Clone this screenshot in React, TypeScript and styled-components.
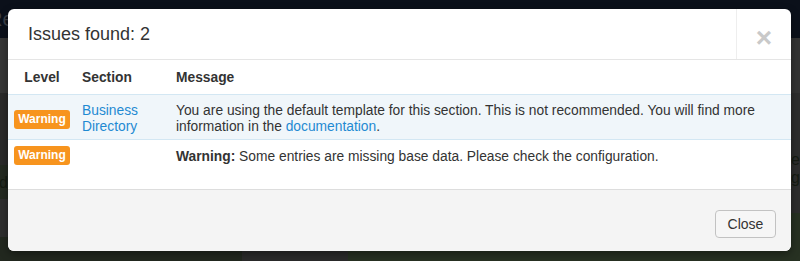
import React from "react";
import styled, { createGlobalStyle } from "styled-components";

const Global = createGlobalStyle`
  html, body { margin: 0; padding: 0; }
  body {
    width: 800px;
    height: 261px;
    overflow: hidden;
    background: #2c2c2c;
    font-family: "Liberation Sans", Arial, Helvetica, sans-serif;
  }
`;

/* ---------- dimmed page behind the modal ---------- */
const Page = styled.div`
  position: relative;
  width: 800px;
  height: 261px;
  display: flex;
  flex-direction: column;
`;

const TopBar = styled.div`
  height: 38px;
  background: #0b101a;
  color: #3c4048;
  font-size: 20px;
  line-height: 38px;
  overflow: hidden;
  white-space: nowrap;
  text-indent: -12px;
`;

const PageBody = styled.div`
  flex: 1;
  display: grid;
  grid-template-columns: 242px 106px 1fr;
`;

const Column = styled.div`
  display: flex;
  flex-direction: column;
`;

const Block = styled.div<{ $h?: number; $bg: string; $grow?: boolean }>`
  height: ${(p) => (p.$h ? `${p.$h}px` : "auto")};
  flex: ${(p) => (p.$grow ? 1 : "none")};
  background: ${(p) => p.$bg};
  color: #151b12;
  font-size: 16px;
  line-height: 18px;
  overflow: hidden;
  white-space: nowrap;
`;

const BgText = styled.div<{ $indent: number; $pad?: number }>`
  padding-top: ${(p) => p.$pad ?? 0}px;
  text-indent: ${(p) => p.$indent}px;
`;

/* ---------- modal ---------- */
const Overlay = styled.div`
  position: absolute;
  inset: 0;
  padding: 9px 9px 0 8px;
`;

const Modal = styled.div`
  width: 783px;
  height: 242px;
  background: #fff;
  border-radius: 6px;
  overflow: hidden;
  display: flex;
  flex-direction: column;
  color: #333;
  box-shadow: 0 3px 9px rgba(0, 0, 0, 0.4);
`;

const Header = styled.div`
  height: 50px;
  display: flex;
  border-bottom: 1px solid #e5e5e5;
`;

const Title = styled.h4`
  flex: 1;
  margin: 0;
  padding-left: 20px;
  font-size: 18px;
  font-weight: normal;
  line-height: 50px;
  color: #333;
`;

const CloseX = styled.button`
  width: 55px;
  border: none;
  border-left: 1px solid #eeeeee;
  background: transparent;
  color: #c9c9c9;
  font-family: "Liberation Sans", Arial, sans-serif;
  font-size: 28px;
  font-weight: bold;
  line-height: 1;
  padding: 8px 0 0 0;
  cursor: pointer;
`;

const Table = styled.div`
  display: grid;
  grid-template-columns: 68px 94px 1fr;
  font-size: 13.8px;
  line-height: 16px;
`;

const HeadCell = styled.div<{ $center?: boolean }>`
  height: 35px;
  box-sizing: border-box;
  display: flex;
  align-items: center;
  justify-content: ${(p) => (p.$center ? "center" : "flex-start")};
  padding: 1px 6px 0;
  font-weight: bold;
  color: #333;
  border-bottom: 1px solid #d3e7f3;
`;

const Cell = styled.div<{
  $info?: boolean;
  $align: "center" | "start";
  $pt: number;
  $pb: number;
  $border: string;
}>`
  display: flex;
  align-items: ${(p) => (p.$align === "center" ? "center" : "flex-start")};
  padding: ${(p) => `${p.$pt}px 6px ${p.$pb}px`};
  background: ${(p) => (p.$info ? "#f0f6fa" : "#fff")};
  border-bottom: 1px solid ${(p) => p.$border};
`;

const Badge = styled.span`
  display: inline-block;
  width: 56px;
  height: 19px;
  box-sizing: border-box;
  background: #f7941e;
  color: #fff;
  border-radius: 3px;
  font-size: 12px;
  font-weight: bold;
  line-height: 19px;
  text-align: center;
`;

const Link = styled.a`
  color: #1f8ad2;
  text-decoration: none;
`;

const Message = styled.div<{ $offset?: number }>`
  padding-top: ${(p) => p.$offset ?? 0}px;
`;

const Footer = styled.div`
  flex: 1;
  background: #f4f4f4;
  display: flex;
  justify-content: flex-end;
  align-items: flex-start;
  padding: 20px 15px 0 0;
`;

const Button = styled.button`
  width: 61px;
  height: 28px;
  background: #f6f6f6;
  border: 1px solid #c2c2c2;
  border-radius: 4px;
  color: #333;
  font-family: "Liberation Sans", Arial, sans-serif;
  font-size: 14px;
  padding: 0;
  cursor: pointer;
`;

type Issue = {
  section?: string;
  info?: boolean;
  content: React.ReactNode;
};

const issues: Issue[] = [
  {
    section: "Business Directory",
    info: true,
    content: (
      <>
        You are using the default template for this section. This is not recommended. You will find
        more information in the <Link href="#">documentation</Link>.
      </>
    ),
  },
  {
    content: (
      <>
        <b>Warning:</b> Some entries are missing base data. Please check the configuration.
      </>
    ),
  },
];

export default function App() {
  return (
    <>
      <Global />
      <Page>
        <TopBar>Re</TopBar>
        <PageBody>
          <Column>
            <Block $h={55} $bg="#363636" />
            <Block $h={72} $bg="#2a2a2a" />
            <Block $h={34} $bg="#242a21">
              <BgText $indent={-10} $pad={9}>ed</BgText>
            </Block>
            <Block $h={38} $bg="#2e2e2e" />
            <Block $grow $bg="#22281f" />
          </Column>
          <Column>
            <Block $h={199} $bg="#2e2e2e" />
            <Block $grow $bg="#2b2b2b" />
          </Column>
          <Column>
            <Block $h={55} $bg="#333333" />
            <Block $h={120} $bg="#2d2d2d">
              <BgText $indent={443} $pad={58}>er</BgText>
              <BgText $indent={443}>gr</BgText>
            </Block>
            <Block $grow $bg="#273122">
              <BgText $indent={4} $pad={8}>The pioneer of the multi-directory feature, p</BgText>
            </Block>
          </Column>
        </PageBody>

        <Overlay>
          <Modal>
            <Header>
              <Title>Issues found: 2</Title>
              <CloseX aria-label="Close">×</CloseX>
            </Header>
            <Table>
              <HeadCell $center>Level</HeadCell>
              <HeadCell>Section</HeadCell>
              <HeadCell>Message</HeadCell>
              {issues.map((issue, i) => {
                const last = i === issues.length - 1;
                const border = last ? "#dddddd" : "#d3e7f3";
                const align = issue.info ? "center" : "start";
                const pt = issue.info ? 8 : 6;
                const pb = issue.info ? 4 : 24;
                return (
                  <React.Fragment key={i}>
                    <Cell $info={issue.info} $align={align} $pt={pt} $pb={pb} $border={border}>
                      <Badge>Warning</Badge>
                    </Cell>
                    <Cell $info={issue.info} $align="start" $pt={pt} $pb={pb} $border={border}>
                      {issue.section && <Link href="#">{issue.section}</Link>}
                    </Cell>
                    <Cell $info={issue.info} $align="start" $pt={pt} $pb={pb} $border={border}>
                      <Message $offset={issue.info ? 0 : 3}>{issue.content}</Message>
                    </Cell>
                  </React.Fragment>
                );
              })}
            </Table>
            <Footer>
              <Button>Close</Button>
            </Footer>
          </Modal>
        </Overlay>
      </Page>
    </>
  );
}
